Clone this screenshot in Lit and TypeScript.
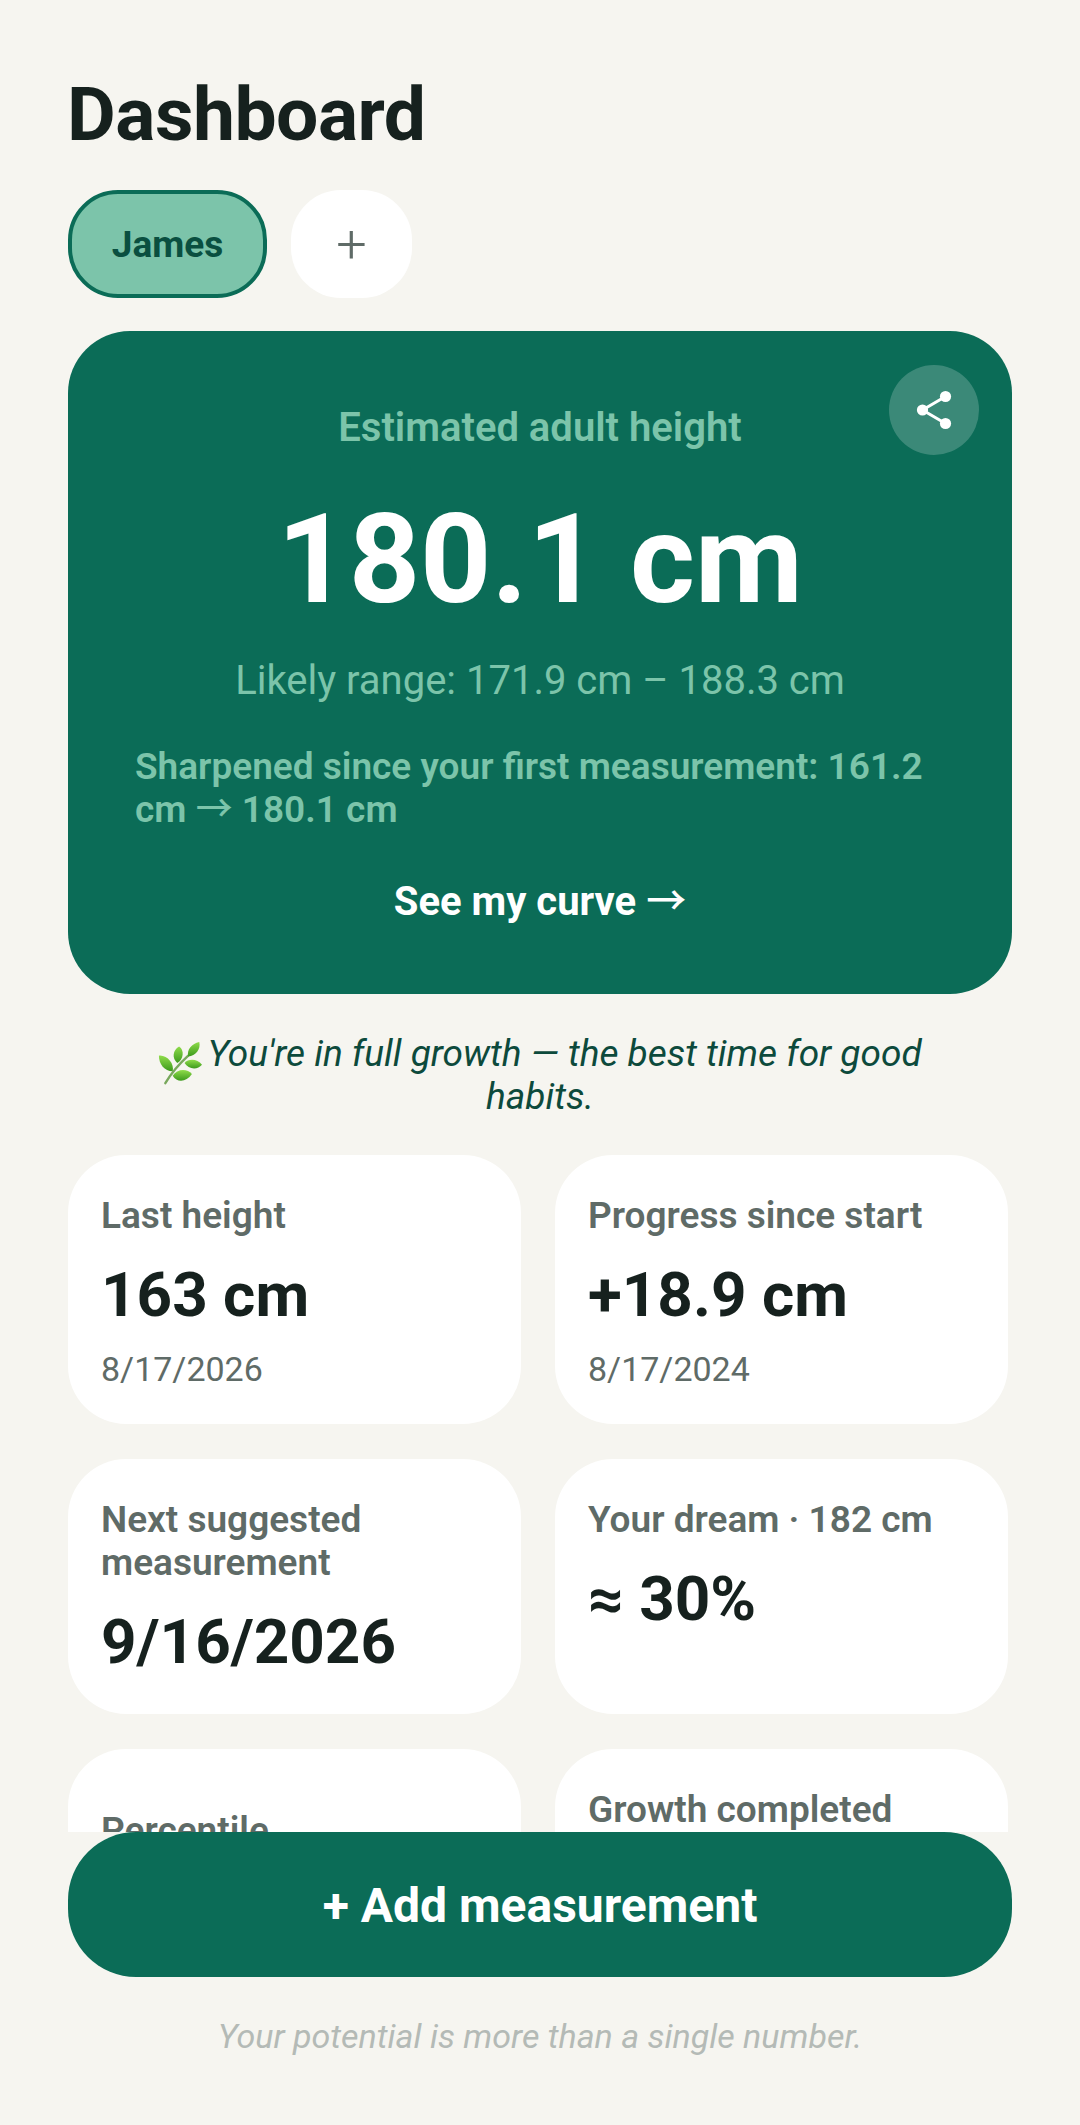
import { LitElement, html, css } from "lit";
import { customElement } from "lit/decorators.js";

@customElement("app-root")
export class AppRoot extends LitElement {
  static styles = css`
    :host { display: block; height: 2125px; background: #f6f5f0; font-family: Roboto, "Noto Sans", sans-serif; color: #16211e; overflow: hidden; }
    .page { height: 2125px; display: flex; flex-direction: column; }
    .scroll { height: 1832px; overflow: hidden; padding: 68px 68px 0; box-sizing: border-box; flex: none; }
    h1 { margin: 0 0 0 -1px; font-size: 75px; line-height: 92px; font-weight: 700; letter-spacing: -0.5px; }
    .tabs { display: flex; gap: 24px; margin-top: 30px; }
    .tab { height: 108px; border-radius: 50px; box-sizing: border-box; display: flex; align-items: center; justify-content: center; }
    .tab.on { width: 199px; background: #7cc4aa; border: 4px solid #0b6c57; color: #0a4f40; font-size: 37px; font-weight: 700; }
    .tab.add { width: 121px; background: #fff; color: #5f6b67; font-size: 54px; font-weight: 300; }
    .hero { position: relative; margin-top: 33px; width: 944px; height: 663px; background: #0b6c57; border-radius: 62px; box-sizing: border-box; padding: 74px 67px 0; text-align: center; color: #7cc4aa; }
    .share { position: absolute; right: 33px; top: 34px; width: 90px; height: 90px; border-radius: 50%; background: rgba(255,255,255,.2); display: flex; align-items: center; justify-content: center; }
    .hl { font-size: 40px; font-weight: 600; line-height: 46px; }
    .big { font-size: 124.5px; line-height: 146px; font-weight: 700; color: #fff; margin-top: 35px; }
    .range { font-size: 40px; line-height: 46px; margin-top: 26px; }
    .sharp { font-size: 37px; line-height: 43px; font-weight: 600; text-align: left; margin-top: 41px; }
    .curve { font-size: 40px; line-height: 46px; font-weight: 700; color: #fff; margin-top: 47px; }
    .arrow { font-family: "Noto Sans CJK SC", sans-serif; font-weight: 500; line-height: 1; }
    .quote { width: 800px; margin: 38px auto 0; text-align: center; font-style: italic; font-size: 37px; line-height: 43px; color: #0d4a3c; }
    .herb { width: 44px; height: 44px; vertical-align: -9px; margin: -10px -4px -10px 0; }
    .grid { display: grid; grid-template-columns: 453px 453px; gap: 35px 34px; margin-top: 37px; }
    .card { background: #fff; border-radius: 58px; padding: 39px 33px 0; box-sizing: border-box; }
    .r1 { height: 269px; } .r2 { height: 255px; } .r3 { height: 200px; }
    .card.center { padding-top: 60px; }
    .lab { font-size: 37px; line-height: 43px; font-weight: 600; color: #5f6b67; }
    .val { font-size: 62px; line-height: 73px; font-weight: 700; margin-top: 21px; }
    .date { font-size: 34px; line-height: 38px; color: #5f6b67; margin-top: 19px; }
    .foot { flex: none; padding: 0 68px; background: #f6f5f0; }
    .cta { height: 145px; padding-top: 2px; box-sizing: border-box; border-radius: 68px; background: #0b6c57; color: #fff; font-size: 48px; font-weight: 700; display: flex; align-items: center; justify-content: center; }
    .note { text-align: center; font-style: italic; font-size: 34px; line-height: 40px; color: #b4bab6; margin-top: 39px; }
  `;
  render() {
    return html`<div class="page">
      <div class="scroll">
        <h1>Dashboard</h1>
        <div class="tabs"><div class="tab on">James</div><div class="tab add">+</div></div>
        <div class="hero">
          <div class="share"><svg width="40" height="40" viewBox="0 0 40 40" fill="#fff"><path d="M31.5 6.5 8.5 20 31.5 33.5" fill="none" stroke="#fff" stroke-width="3"/><circle cx="31.5" cy="6.5" r="5.6"/><circle cx="8.5" cy="20" r="5.6"/><circle cx="31.5" cy="33.5" r="5.6"/></svg></div>
          <div class="hl">Estimated adult height</div>
          <div class="big">180.1 cm</div>
          <div class="range">Likely range: 171.9 cm – 188.3 cm</div>
          <div class="sharp">Sharpened since your first measurement: 161.2 cm <span class="arrow">→</span> 180.1 cm</div>
          <div class="curve">See my curve <span class="arrow">→</span></div>
        </div>
        <div class="quote"><svg class="herb" viewBox="0 0 48 48" role="img" aria-label="herb"><defs><linearGradient id="g" x1="0" y1="0" x2="0" y2="1"><stop offset="0" stop-color="#8fdc4a"/><stop offset="1" stop-color="#3c9a1c"/></linearGradient></defs><path d="M8 46C14 36 22 26 33 16" fill="none" stroke="#78a85c" stroke-width="2.6" stroke-linecap="round"/><path d="M45 1C37 3 31 9 33 17C41 16 47 9 45 1Z" fill="url(#g)"/><path d="M23 6C16 10 15 19 21 24C28 20 29 10 23 6Z" fill="url(#g)"/><path d="M1 16C1 25 7 33 16 33C18 25 10 15 1 16Z" fill="url(#g)"/><path d="M29 24C33 19 43 19 48 26C43 32 33 31 29 24Z" fill="url(#g)"/><path d="M16 38C21 30 32 30 37 36C31 45 21 46 16 38Z" fill="url(#g)"/></svg> You're in full growth — the best time for good habits.</div>
        <div class="grid">
          <div class="card r1"><div class="lab">Last height</div><div class="val">163 cm</div><div class="date">8/17/2026</div></div>
          <div class="card r1"><div class="lab">Progress since start</div><div class="val">+18.9 cm</div><div class="date">8/17/2024</div></div>
          <div class="card r2"><div class="lab">Next suggested measurement</div><div class="val">9/16/2026</div></div>
          <div class="card r2"><div class="lab">Your dream · 182 cm</div><div class="val">≈ 30%</div></div>
          <div class="card r3 center"><div class="lab">Percentile</div></div>
          <div class="card r3"><div class="lab">Growth completed</div></div>
        </div>
      </div>
      <div class="foot">
        <div class="cta">+ Add measurement</div>
        <div class="note">Your potential is more than a single number.</div>
      </div>
    </div>`;
  }
}
